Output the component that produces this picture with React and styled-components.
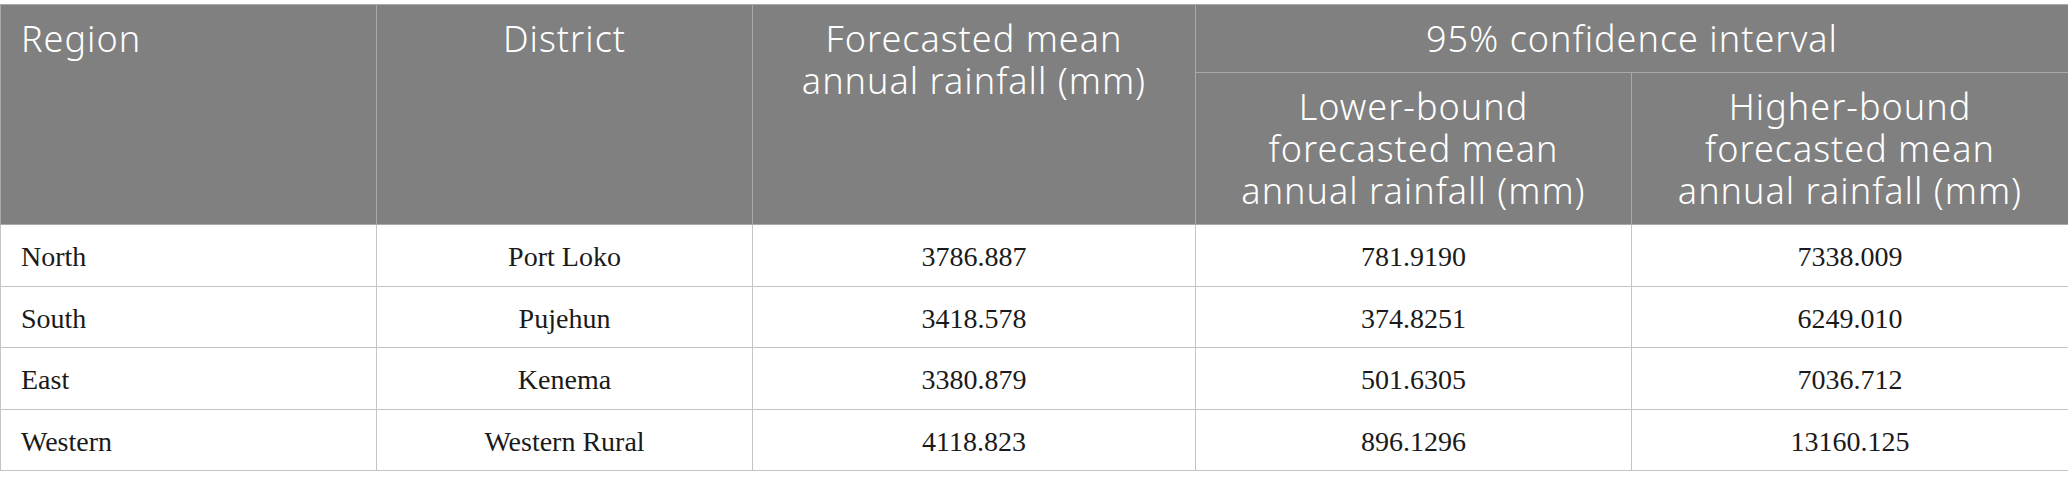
import React from "react";
import styled, { createGlobalStyle } from "styled-components";

const Global = createGlobalStyle`
  html, body { margin: 0; padding: 0; background: #ffffff; }
  body { padding-top: 4px; }
`;

const Table = styled.table`
  width: 2068px;
  border-collapse: collapse;
  table-layout: fixed;
`;

const HeadCell = styled.th`
  background: #7f807f;
  color: #ffffff;
  font-family: "Noto Sans", "Open Sans", sans-serif;
  font-weight: 300;
  font-size: 36px;
  line-height: 42px;
  letter-spacing: 1px;
  padding: 13px 20px 12px 20px;
  text-align: ${(p) => p.$align || "center"};
  vertical-align: top;
  border: 1px solid #a9a9a9;
`;

const BodyCell = styled.td`
  color: #1a1a1a;
  font-family: "Liberation Serif", "Times New Roman", serif;
  font-size: 28px;
  line-height: 34.5px;
  padding: 15px 20px 11px 20px;
  text-align: ${(p) => p.$align || "center"};
  border: 1px solid #c4c4c4;
`;

const widths = [376, 376, 443, 436, 437];

const rows = [
  ["North", "Port Loko", "3786.887", "781.9190", "7338.009"],
  ["South", "Pujehun", "3418.578", "374.8251", "6249.010"],
  ["East", "Kenema", "3380.879", "501.6305", "7036.712"],
  ["Western", "Western Rural", "4118.823", "896.1296", "13160.125"],
];

export default function App() {
  return (
    <>
      <Global />
      <Table>
        <colgroup>
          {widths.map((w, i) => (
            <col key={i} style={{ width: w }} />
          ))}
        </colgroup>
        <thead>
          <tr>
            <HeadCell rowSpan={2} $align="left">Region</HeadCell>
            <HeadCell rowSpan={2}>District</HeadCell>
            <HeadCell rowSpan={2}>
              Forecasted mean
              <br />
              annual rainfall (mm)
            </HeadCell>
            <HeadCell colSpan={2}>95% confidence interval</HeadCell>
          </tr>
          <tr>
            <HeadCell>
              Lower-bound
              <br />
              forecasted mean
              <br />
              annual rainfall (mm)
            </HeadCell>
            <HeadCell>
              Higher-bound
              <br />
              forecasted mean
              <br />
              annual rainfall (mm)
            </HeadCell>
          </tr>
        </thead>
        <tbody>
          {rows.map((r, i) => (
            <tr key={i}>
              {r.map((c, j) => (
                <BodyCell key={j} $align={j === 0 ? "left" : "center"}>
                  {c}
                </BodyCell>
              ))}
            </tr>
          ))}
        </tbody>
      </Table>
    </>
  );
}
